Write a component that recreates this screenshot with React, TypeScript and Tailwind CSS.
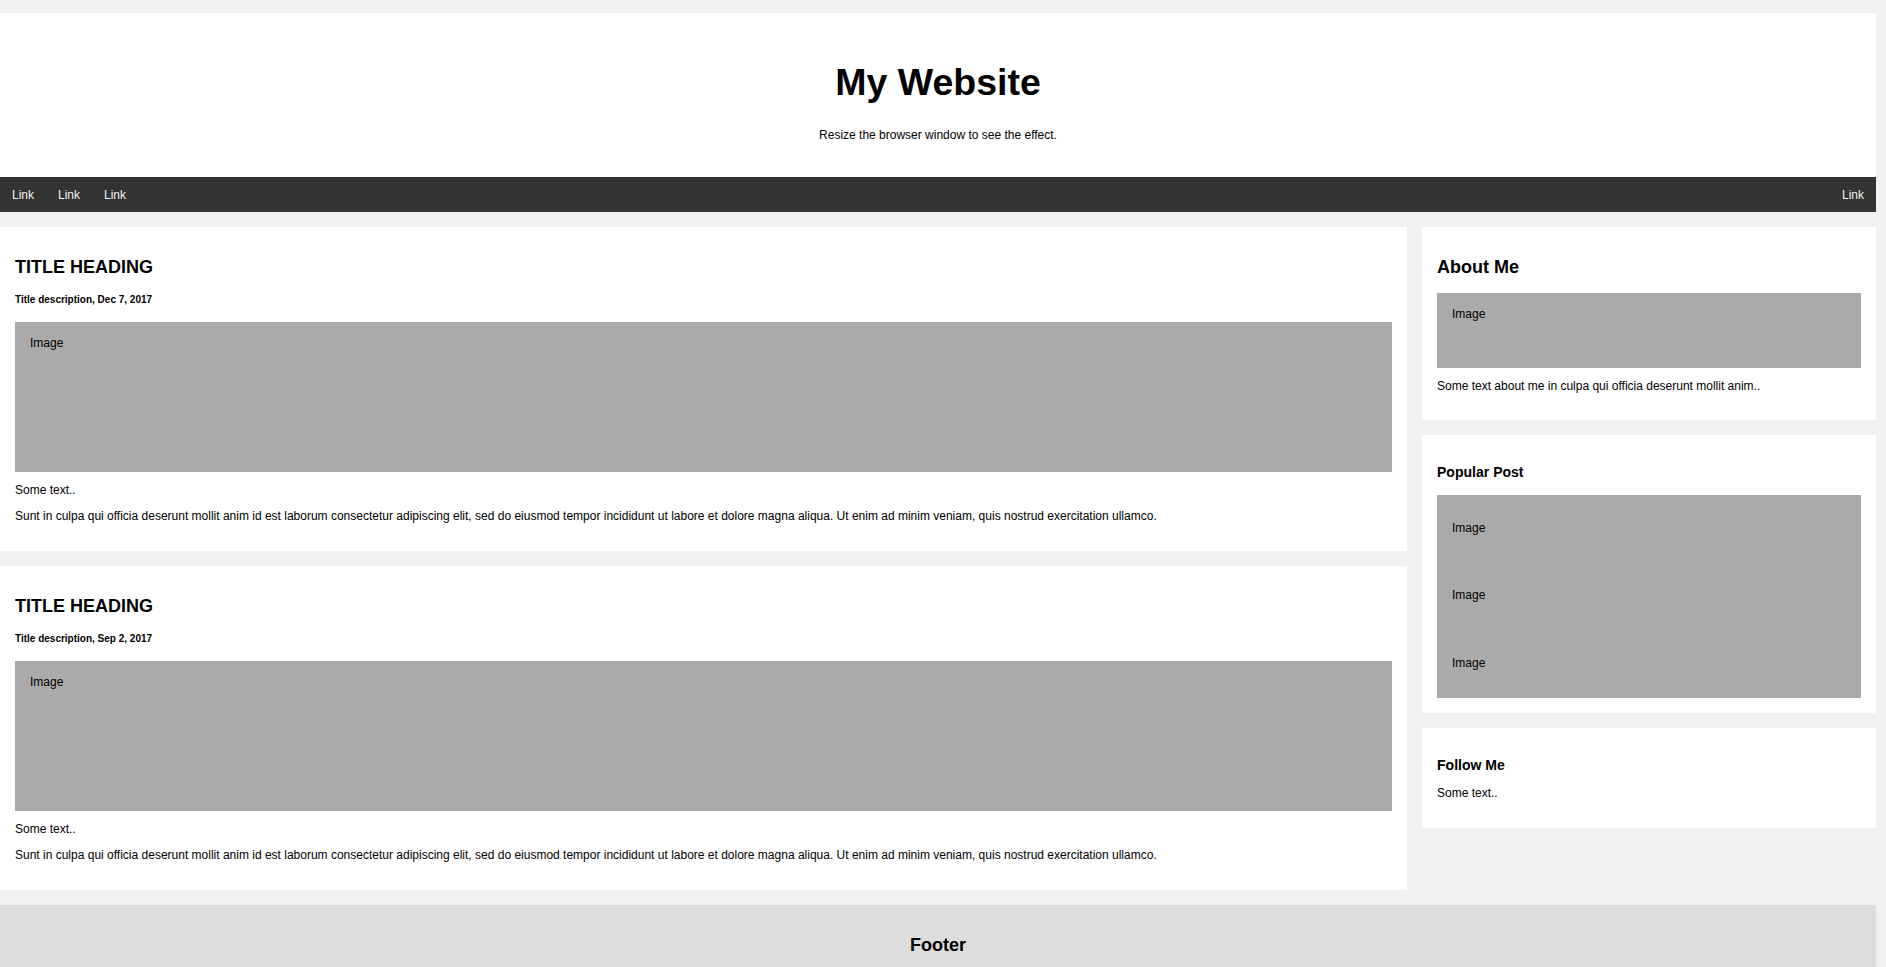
export default function App() {
  const posts = [
    { id: 1, date: "Dec 7, 2017" },
    { id: 2, date: "Sep 2, 2017" },
  ];

  const body =
    "Sunt in culpa qui officia deserunt mollit anim id est laborum consectetur adipiscing elit, sed do eiusmod tempor incididunt ut labore et dolore magna aliqua. Ut enim ad minim veniam, quis nostrud exercitation ullamco.";

  return (
    <div className="min-h-screen bg-[#f1f1f1] pt-[13px] pr-[10px] font-['Liberation_Sans',Arial,sans-serif] text-[12px] leading-[13.8px] text-black">
      {/* header */}
      <div className="bg-white py-[22.5px] text-center">
        <h1 className="my-[25.1px] text-[37.5px] font-bold leading-[43.1px]">My Website</h1>
        <p className="mb-[12px]">Resize the browser window to see the effect.</p>
      </div>

      {/* top nav */}
      <div className="flex bg-[#333]">
        {["Link", "Link", "Link"].map((l, i) => (
          <a key={i} className="block px-[12px] py-[10.5px] leading-[14px] text-[#f2f2f2]">
            {l}
          </a>
        ))}
        <a className="ml-auto block px-[12px] py-[10.5px] leading-[14px] text-[#f2f2f2]">Link</a>
      </div>

      <div className="flex items-start">
        {/* left column */}
        <div className="w-3/4">
          {posts.map((post) => (
            <div key={post.id} className="mt-[15px] bg-white p-[15px]">
              <h2 className="mt-[14.94px] text-[18px] font-bold leading-[20.7px]">TITLE HEADING</h2>
              <h5 className="my-[16.63px] text-[10px] font-bold leading-[11.45px]">
                Title description, {post.date}
              </h5>
              <div className="h-[150px] bg-[#aaa] p-[15px]">Image</div>
              <p className="my-[12px]">Some text..</p>
              <p className="my-[12px]">{body}</p>
            </div>
          ))}
        </div>

        {/* right column */}
        <div className="w-1/4 pl-[15px]">
          <div className="mt-[15px] bg-white p-[15px]">
            <h2 className="my-[14.94px] text-[18px] font-bold leading-[20.7px]">About Me</h2>
            <div className="h-[75px] bg-[#aaa] p-[15px]">Image</div>
            <p className="my-[12px]">Some text about me in culpa qui officia deserunt mollit anim..</p>
          </div>

          <div className="mt-[15px] bg-white p-[15px]">
            <h3 className="my-[14.04px] text-[14.04px] font-bold leading-[16.15px]">Popular Post</h3>
            {[1, 2, 3].map((n) => (
              <div key={n} className="bg-[#aaa] px-[15px] py-[27px]">
                <p>Image</p>
              </div>
            ))}
          </div>

          <div className="mt-[15px] bg-white p-[15px]">
            <h3 className="my-[14.04px] text-[14.04px] font-bold leading-[16.15px]">Follow Me</h3>
            <p className="mb-[12px]">Some text..</p>
          </div>
        </div>
      </div>

      {/* footer */}
      <div className="mt-[15px] bg-[#ddd] p-[15px] text-center">
        <h2 className="my-[14.94px] text-[18px] font-bold leading-[20.7px]">Footer</h2>
      </div>
    </div>
  );
}
